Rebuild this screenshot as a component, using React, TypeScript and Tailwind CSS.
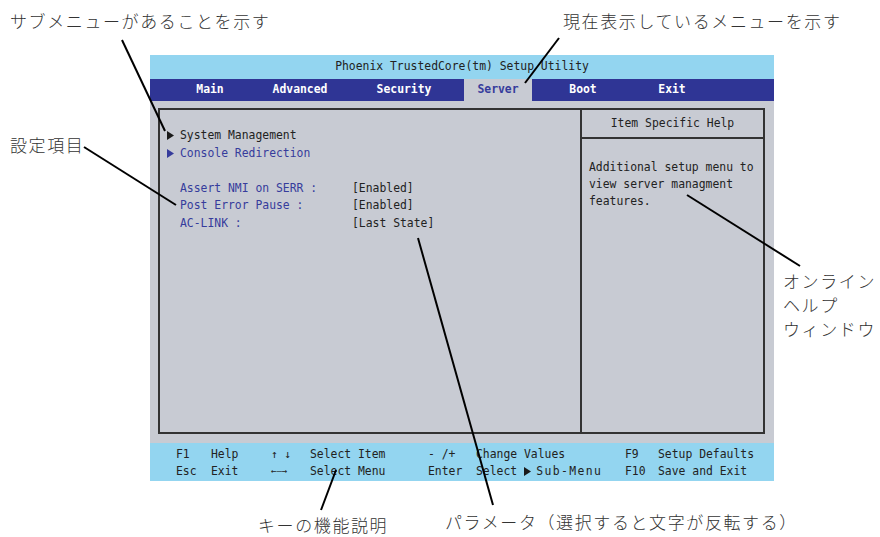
import React from 'react';

const mono = { fontFamily: '"DejaVu Sans Mono", "Liberation Mono", monospace' };
const jp = { fontFamily: '"Noto Sans CJK JP", "Noto Sans", sans-serif' };

const tabs = [
  { label: 'Main', w: 'w-[68px]' },
  { label: 'Advanced', w: 'w-[112px]' },
  { label: 'Security', w: 'w-[96px]' },
];

const rightTabs = [
  { label: 'Boot', w: 'w-[102px]' },
  { label: 'Exit', w: 'w-[76px]' },
];

const Tri: React.FC<{ color: string; className?: string }> = ({ color, className }) => (
  <svg width="7" height="9" viewBox="0 0 7 9" className={className}>
    <path d="M0 0 L7 4.5 L0 9 Z" fill={color} />
  </svg>
);

const KeyRow: React.FC<{ cells: React.ReactNode[] }> = ({ cells }) => {
  const widths = [
    'w-[35px]',
    'w-[60px]',
    'w-[39px]',
    'w-[118px]',
    'w-[48px]',
    'w-[149px]',
    'w-[33px]',
    'flex-1',
  ];
  return (
    <div className="flex h-[17px] items-center pl-[26px]">
      {cells.map((c, i) => (
        <span key={i} className={`${widths[i]} flex items-center whitespace-nowrap`}>
          {c}
        </span>
      ))}
    </div>
  );
};

const Setting: React.FC<{ label: string; value: string }> = ({ label, value }) => (
  <div className="flex h-[17.5px] items-center pl-[20px]">
    <span className="w-[172px] text-[#363c9c]">{label}</span>
    <span className="text-[#222]">{value}</span>
  </div>
);

const note = 'absolute text-[17px] font-light leading-[24px] tracking-[1.6px] text-[#333]';

const App: React.FC = () => {
  return (
    <div className="relative w-[880px] h-[537px] overflow-hidden bg-white">
      {/* BIOS screen */}
      <div
        className="ml-[150px] mt-[55px] flex w-[624px] flex-col text-[11.4px] leading-none"
        style={mono}
      >
        <div className="flex h-[24px] items-center justify-center bg-[#93d5f0] text-[#222]">
          Phoenix TrustedCore(tm) Setup Utility
        </div>

        <div className="flex h-[22px] items-stretch bg-[#2f3595] font-bold text-white">
          <div className="w-[26px]" />
          {tabs.map((t) => (
            <div key={t.label} className={`${t.w} flex items-center justify-center`}>
              {t.label}
            </div>
          ))}
          <div className="w-[12px]" />
          <div className="flex w-[68px] items-center justify-center bg-[#c8cbd3] text-[#363c9c]">
            Server
          </div>
          {rightTabs.map((t) => (
            <div key={t.label} className={`${t.w} flex items-center justify-center`}>
              {t.label}
            </div>
          ))}
        </div>

        <div className="h-[342px] bg-[#c8cbd3] pl-[8px] pr-[9px] pt-[7px] pb-[9px]">
          <div className="flex h-full border-2 border-[#333]">
            <div className="w-[422px] border-r-2 border-[#333] pt-[17px]">
              <div className="flex h-[17.5px] items-center text-[#222]">
                <span className="flex w-[20px] pl-[7px]">
                  <Tri color="#1a1a1a" />
                </span>
                <span>System Management</span>
              </div>
              <div className="flex h-[17.5px] items-center text-[#363c9c]">
                <span className="flex w-[20px] pl-[7px]">
                  <Tri color="#363c9c" />
                </span>
                <span>Console Redirection</span>
              </div>
              <div className="h-[17.5px]" />
              <Setting label="Assert NMI on SERR :" value="[Enabled]" />
              <Setting label="Post Error Pause :" value="[Enabled]" />
              <Setting label="AC-LINK :" value="[Last State]" />
            </div>

            <div className="flex flex-1 flex-col text-[#222]">
              <div className="flex h-[29px] items-center justify-center border-b-2 border-[#333]">
                Item Specific Help
              </div>
              <div className="pl-[7px] pt-[20px] leading-[17px]">
                <div>Additional setup menu to</div>
                <div>view server managment</div>
                <div>features.</div>
              </div>
            </div>
          </div>
        </div>

        <div className="h-[38px] bg-[#93d5f0] pt-[3px] text-[#222]">
          <KeyRow
            cells={[
              'F1',
              'Help',
              <span className="text-[11px]">↑ ↓</span>,
              'Select Item',
              '- /+',
              'Change Values',
              'F9',
              'Setup Defaults',
            ]}
          />
          <KeyRow
            cells={[
              'Esc',
              'Exit',
              <span className="text-[9px]">←—→</span>,
              'Select Menu',
              'Enter',
              <>
                <span>Select</span>
                <Tri color="#1a1a1a" className="ml-[7px] mr-[5px]" />
                <span className="tracking-[1.4px]">Sub-Menu</span>
              </>,
              'F10',
              'Save and Exit',
            ]}
          />
        </div>
      </div>

      {/* annotation labels */}
      <div className={`${note} left-[10px] top-[9px]`} style={jp}>
        サブメニューがあることを示す
      </div>
      <div className={`${note} left-[563px] top-[9px]`} style={jp}>
        現在表示しているメニューを示す
      </div>
      <div className={`${note} left-[10px] top-[133px]`} style={jp}>
        設定項目
      </div>
      <div className={`${note} left-[783px] top-[269px]`} style={jp}>
        <div>オンライン</div>
        <div>ヘルプ</div>
        <div>ウィンドウ</div>
      </div>
      <div className={`${note} left-[258px] top-[513px]`} style={jp}>
        キーの機能説明
      </div>
      <div className={`${note} left-[445px] top-[510px]`} style={jp}>
        パラメータ（選択すると文字が反転する）
      </div>

      {/* leader lines */}
      <svg
        className="pointer-events-none absolute left-0 top-0"
        width="880"
        height="537"
        viewBox="0 0 880 537"
      >
        <g stroke="#000" strokeWidth="2" strokeLinecap="butt">
          <line x1="122" y1="40" x2="165" y2="131" />
          <line x1="559" y1="38" x2="525" y2="83" />
          <line x1="84" y1="147" x2="176" y2="205" />
          <line x1="687" y1="195" x2="800" y2="266" />
          <line x1="418" y1="238" x2="493" y2="505" />
          <line x1="336" y1="470" x2="321" y2="510" />
        </g>
      </svg>
    </div>
  );
};

export default App;
